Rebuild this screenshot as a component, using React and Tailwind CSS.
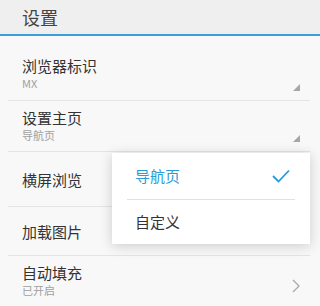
import React from "react";

const font = { fontFamily: '"Noto Sans CJK SC", "Noto Sans", sans-serif' };

function Tri() {
  return (
    <svg width="7" height="7" viewBox="0 0 7 7" className="absolute right-[20px] bottom-[10px]">
      <polygon points="7,0 7,7 0,7" fill="#a6a6a6" />
    </svg>
  );
}

export default function App() {
  return (
    <div className="relative w-[320px] h-[306px] overflow-hidden bg-[#f8f8f8]" style={font}>
      <div className="h-[36px] bg-[#efefef] border-b-2 border-[#3a9fd8] flex items-center px-[22px]">
        <span className="text-[18px] leading-[24px] text-[#444]">设置</span>
      </div>
      <div className="flex flex-col">
        <div className="relative h-[65px] px-[22px] flex flex-col justify-end pb-[11px]">
          <div className="text-[15px] leading-[20px] text-[#333]">浏览器标识</div>
          <div className="text-[11px] leading-[14px] text-[#a0a0a0]">MX</div>
          <Tri />
          <div className="absolute left-[8px] right-[10px] bottom-0 h-px bg-[#e4e4e4]" />
        </div>
        <div className="relative h-[51px] px-[22px] flex flex-col justify-end pb-[10px]">
          <div className="text-[15px] leading-[20px] text-[#333]">设置主页</div>
          <div className="text-[11px] leading-[14px] text-[#a0a0a0]">导航页</div>
          <Tri />
          <div className="absolute left-[8px] right-[10px] bottom-0 h-px bg-[#e4e4e4]" />
        </div>
        <div className="relative h-[55px] px-[22px] flex items-center">
          <div className="text-[15px] leading-[20px] text-[#333]">横屏浏览</div>
          <div className="absolute left-[8px] right-[10px] bottom-0 h-px bg-[#e4e4e4]" />
        </div>
        <div className="relative h-[49px] px-[22px] flex items-center">
          <div className="text-[15px] leading-[20px] text-[#333]">加载图片</div>
          <div className="absolute left-[8px] right-[10px] bottom-0 h-px bg-[#e4e4e4]" />
        </div>
        <div className="relative h-[50px] px-[22px] flex flex-col justify-start pt-[7px]">
          <div className="text-[15px] leading-[20px] text-[#333]">自动填充</div>
          <div className="text-[11px] leading-[14px] text-[#a0a0a0]">已开启</div>
          <svg width="8" height="14" viewBox="0 0 8 14" className="absolute right-[20px] top-[23px]">
            <polyline points="1,1 7,7 1,13" fill="none" stroke="#a8a8a8" strokeWidth="1.3" />
          </svg>
        </div>
      </div>
      <div className="absolute left-[112px] top-[153px] w-[198px] h-[91px] bg-white shadow-[0_2px_12px_rgba(0,0,0,0.18)] flex flex-col">
        <div className="h-[46px] flex items-center justify-between pl-[23px] pr-[20px]">
          <span className="text-[15px] leading-[20px] text-[#2a9ad8]">导航页</span>
          <svg width="18" height="14" viewBox="0 0 18 14">
            <polyline points="1,7 6.5,12.5 17,1.5" fill="none" stroke="#2a9ad8" strokeWidth="1.8" />
          </svg>
        </div>
        <div className="mx-[15px] h-px bg-[#e2e2e2]" />
        <div className="flex-1 flex items-center pl-[23px]">
          <span className="text-[15px] leading-[20px] text-[#333]">自定义</span>
        </div>
      </div>
    </div>
  );
}
